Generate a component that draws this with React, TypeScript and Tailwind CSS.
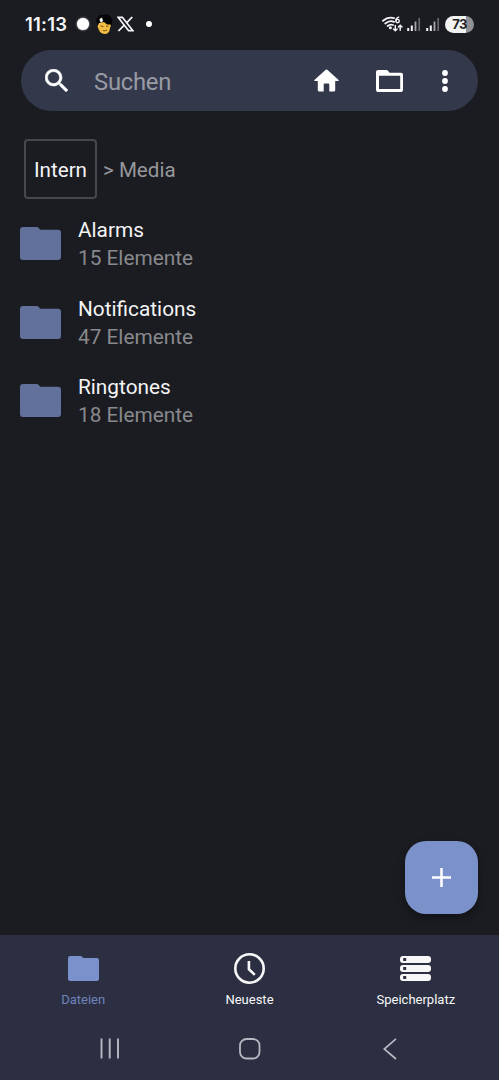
import React from "react";

const files = [
  { name: "Alarms", count: "15 Elemente" },
  { name: "Notifications", count: "47 Elemente" },
  { name: "Ringtones", count: "18 Elemente" },
];

function Folder({ className }: { className: string }) {
  return (
    <svg viewBox="0 0 41 33" className={className} fill="currentColor" preserveAspectRatio="none">
      <path d="M3 0H16.5Q18 0 19 1.2L20.2 2.8H38Q41 2.8 41 5.8V30Q41 33 38 33H3Q0 33 0 30V3Q0 0 3 0Z" />
    </svg>
  );
}

function Avatar() {
  return (
    <svg viewBox="0 0 18 22" className="ml-[6px] h-[22px] w-[18px]">
      <path d="M2 10Q0 6 3 4Q4 1 8 2Q13 0 16 4Q18.500 8 16 14L14 17L3 14Z" fill="#050506" />
      <path d="M4 10L9 9L12 11.500L15.500 11.500Q16.500 13 15 15Q14.500 21 9.500 21Q5 20.500 4 17L2.500 13.500Z" fill="#f3bd43" />
      <path d="M4.500 6L7 4.500L8 8L6.500 9.500L5 8.500Z" fill="#f6f6f6" />
      <path d="M5.500 13L8.500 13.500M11 13.500L13.500 13M8 17.500Q10 18.500 12 17" stroke="#69430f" strokeWidth=".9" fill="none" />
    </svg>
  );
}

function Signal({ className }: { className: string }) {
  return (
    <svg viewBox="0 0 14 15" className={"h-[15px] w-[14px] " + className}>
      <path d="M1.2 11V14M4.8 8.5V14" stroke="#f3f3f5" strokeWidth="2" />
      <path d="M8.5 4.5V14" stroke="#a5a5aa" strokeWidth="1.8" />
      <path d="M12.2 1V14" stroke="#67676d" strokeWidth="1.7" />
    </svg>
  );
}

function StatusBar() {
  return (
    <header className="flex h-[48px] items-center pl-[25px] pr-[25px] text-[#f5f5f7]">
      <span className="w-[43px] whitespace-nowrap font-['Inter',sans-serif] text-[18.5px] leading-none font-semibold tracking-[0.2px]">11:13</span>
      <span className="ml-[9px] h-[12px] w-[12px] rounded-full bg-white shadow-[0_0_2px_#ffffff]" />
      <Avatar />
      <svg viewBox="0 0 24 24" className="ml-[4px] h-[16px] w-[17px]" preserveAspectRatio="none">
        <path d="M1.5 2H7.6L22.5 22H16.4Z" fill="none" stroke="currentColor" strokeWidth="2.4" />
        <path d="M21.5 1.5L13.4 10.5M10.4 13.5L2 22.5" stroke="currentColor" strokeWidth="2.7" />
      </svg>
      <span className="ml-[12px] h-[6px] w-[6px] rounded-full bg-white" />
      <svg viewBox="0 0 22 17" className="ml-auto h-[17px] w-[22px]" fill="none" stroke="currentColor" strokeWidth="1.8" strokeLinecap="round">
        <path d="M1 4.8Q6 .5 12 2.2M3.3 7.5Q7.5 4 12 5.8M5.7 10Q8 8 11 9" />
        <circle cx="8.4" cy="11.7" r=".6" fill="currentColor" />
        <path d="M16.7 1.1Q13.7 2.2 13.8 4.8" strokeWidth="1.4" />
        <circle cx="15.6" cy="5.1" r="1.7" strokeWidth="1.4" />
        <path d="M13.3 9.5V14.7M11.5 13L13.3 14.8L15.1 13M18.2 14.3V9.3M16.4 11L18.2 9.2L20 11" strokeWidth="1.4" />
      </svg>
      <Signal className="ml-[3px]" />
      <Signal className="ml-[5px]" />
      <span className="ml-[5px] flex h-[17px] w-[29px] items-center justify-center rounded-full bg-[linear-gradient(90deg,#f2f2f3_73%,#919195_73%)] font-['Inter',sans-serif] text-[13px] leading-none font-bold tracking-[-0.6px] text-[#202126]">73</span>
    </header>
  );
}

function SearchBar() {
  return (
    <div className="mx-[21px] mt-[2px] flex h-[61px] items-center rounded-full bg-[#33384b] text-white">
      <svg viewBox="3 3 17.5 17.5" className="ml-[24px] h-[23px] w-[23px]" fill="currentColor" stroke="currentColor" strokeWidth=".35">
        <path d="M15.5 14h-.79l-.28-.27A6.47 6.47 0 0 0 16 9.5 6.5 6.5 0 1 0 9.5 16c1.61 0 3.09-.59 4.23-1.57l.27.28v.79l5 4.99L20.49 19zm-6 0C7.01 14 5 11.99 5 9.5S7.01 5 9.5 5 14 7.01 14 9.5 11.99 14 9.5 14" />
      </svg>
      <span className="ml-[26px] pt-[2px] text-[23.8px] leading-[30px] tracking-[-0.25px] text-[#999ba5]">Suchen</span>
      <svg viewBox="0 0 25 23" className="ml-auto h-[23px] w-[25px]" fill="currentColor">
        <path d="M11.7.8Q12.5 0 13.3.8L24.6 11Q25.2 12 24 12H21.2V21Q21.2 22.5 19.7 22.5H15.3V15.3Q15.3 14.5 14.5 14.5H10.5Q9.7 14.5 9.7 15.3V22.5H5.3Q3.8 22.5 3.8 21V12H1Q-.2 12 .4 11Z" />
      </svg>
      <svg viewBox="0 0 27 22" className="ml-[37px] h-[22px] w-[27px]">
        <path d="M2 0H10.5Q11.5 0 12.2 1L13.5 2.7H25Q27 2.7 27 4.7V20Q27 22 25 22H2Q0 22 0 20V2Q0 0 2 0ZM3 6V19H24.2V5.7H3Z" fill="currentColor" fillRule="evenodd" />
      </svg>
      <svg viewBox="0 0 6 22" className="mr-[30.5px] ml-[38.5px] h-[22px] w-[6px]" fill="currentColor">
        <circle cx="3" cy="3" r="2.9" />
        <circle cx="3" cy="11" r="2.9" />
        <circle cx="3" cy="19" r="2.9" />
      </svg>
    </div>
  );
}

function BottomNavigation() {
  return (
    <nav className="h-[145px] bg-[#2c2f42] text-[13px] leading-[16px] text-[#f7f7f8]">
      <div className="grid h-[84px] grid-cols-3">
        <div className="flex flex-col items-center pt-[21px] text-[#7b91cb]">
          <Folder className="h-[25px] w-[31px]" />
          <span className="mt-[11px] text-[#6f83bb]">Dateien</span>
        </div>
        <div className="flex flex-col items-center pt-[18px]">
          <svg viewBox="0 0 31 31" className="h-[31px] w-[31px]" fill="none" stroke="currentColor" strokeWidth="2.6">
            <circle cx="15.5" cy="15.5" r="14.2" />
            <path d="M14.9 8V16.1L20.8 21.9" />
          </svg>
          <span className="mt-[8px]">Neueste</span>
        </div>
        <div className="flex flex-col items-center pt-[21px]">
          <svg viewBox="0 0 31 25" className="h-[25px] w-[31px]">
            {[0, 9, 18].map((y) => (
              <g key={y}>
                <rect x="0" y={y} width="31" height="7" rx="3" fill="currentColor" />
                <rect x="3.2" y={y + 2} width="3" height="3" fill="#2c2f42" />
              </g>
            ))}
          </svg>
          <span className="mt-[11px]">Speicherplatz</span>
        </div>
      </div>
      <div className="flex h-[61px] items-start pt-[19px] text-[#b7b8c1]">
        <svg viewBox="0 0 20 21" className="ml-[100px] h-[21px] w-[20px]" stroke="currentColor" strokeWidth="1.9">
          <path d="M1.5 .5V20.5M9.7 .5V20.5M18 .5V20.5" />
        </svg>
        <svg viewBox="0 0 22 22" className="ml-[119px] h-[22px] w-[22px]" fill="none" stroke="currentColor" strokeWidth="1.8">
          <rect x="1" y="1" width="19.5" height="19.5" rx="6.5" />
        </svg>
        <svg viewBox="0 0 14 22" className="ml-[122px] h-[22px] w-[14px]" fill="none" stroke="currentColor" strokeWidth="1.7">
          <path d="M13 .8L1.2 11L13 21" />
        </svg>
      </div>
    </nav>
  );
}

export default function App() {
  return (
    <div className="flex h-[1080px] w-[499px] flex-col overflow-hidden bg-[#1b1c21] font-['Roboto',sans-serif]">
      <StatusBar />
      <SearchBar />
      <main className="flex flex-1 flex-col">
        <div className="mt-[28px] ml-[24px] flex h-[60px] items-center text-[20.6px] leading-[24px]">
          <div className="flex h-[60px] w-[73px] items-center justify-center rounded-[4px] border-2 border-[#47484d] pt-[2px] text-[#f4f4f5]">Intern</div>
          <span className="ml-[6px] pt-[2px] text-[#97989c]">&gt; Media</span>
        </div>
        <div className="mt-[17px] flex flex-col gap-[22.5px]">
          {files.map((file) => (
            <div key={file.name} className="flex h-[56px] pl-[20px]">
              <Folder className="mt-[11px] h-[33px] w-[41px] text-[#62719b]" />
              <div className="ml-[17px] text-[20.8px] leading-[28px]">
                <div className="text-[#f4f4f5]">{file.name}</div>
                <div className="text-[#88898d]">{file.count}</div>
              </div>
            </div>
          ))}
        </div>
        <button aria-label="Add" className="mt-auto mr-[21px] mb-[21px] ml-auto flex h-[73px] w-[73px] items-center justify-center rounded-[21px] bg-[#7b91c9] shadow-[0_4px_9px_#00000060]">
          <svg viewBox="0 0 19 19" className="h-[19px] w-[19px]" stroke="white" strokeWidth="2.5">
            <path d="M9.5 0V19M0 9.5H19" />
          </svg>
        </button>
      </main>
      <BottomNavigation />
    </div>
  );
}
